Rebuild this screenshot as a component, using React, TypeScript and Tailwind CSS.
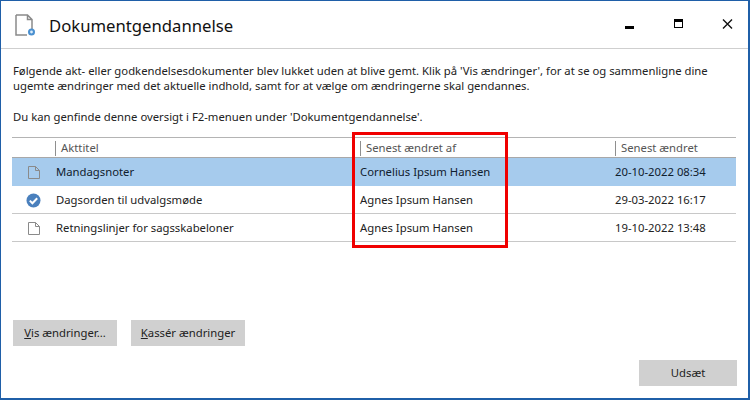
import React from "react";

const font = { fontFamily: '"Noto Sans", "Open Sans", sans-serif' };

function DocIcon({ color = "#8a8a8a" }: { color?: string }) {
  return (
    <svg width="14" height="15" viewBox="0 0 14 15" fill="none">
      <path d="M1.5 1.5H8.5L12.5 5.5V13.5H1.5Z M8.5 1.5V5.5H12.5" stroke={color} strokeWidth="1" fill="none" />
    </svg>
  );
}

function CheckIcon() {
  return (
    <svg width="15" height="15" viewBox="0 0 15 15">
      <circle cx="7.5" cy="7.5" r="7" fill="#4a80bd" />
      <path d="M3.8 7.6L6.4 10.2L11.2 5.2" stroke="#fff" strokeWidth="2" fill="none" />
    </svg>
  );
}

function Sep() {
  return <span className="h-[15px] w-px bg-[#8f8f8f] shrink-0" />;
}

const rows = [
  { t: "Mandagsnoter", a: "Cornelius Ipsum Hansen", d: "20-10-2022 08:34", sel: true, icon: "doc" },
  { t: "Dagsorden til udvalgsmøde", a: "Agnes Ipsum Hansen", d: "29-03-2022 16:17", sel: false, icon: "check" },
  { t: "Retningslinjer for sagsskabeloner", a: "Agnes Ipsum Hansen", d: "19-10-2022 13:48", sel: false, icon: "doc" },
];

export default function App() {
  return (
    <div
      className="relative w-[750px] h-[400px] bg-white border border-r-2 border-b-2 border-[#1f5fa8] flex flex-col text-[#1c1c1c] overflow-hidden"
      style={font}
    >
      <div className="h-[48px] shrink-0 flex items-center border-b border-[#cfcfcf] pl-[14px]">
        <svg width="20" height="23" viewBox="0 0 20 23" fill="none" className="shrink-0 mt-[2px]">
          <path d="M1 1H12.5L17 5.5V15M12 21H1V1 M12.5 1V5.5H17" stroke="#8a8a8a" strokeWidth="1.5" />
          <circle cx="16.5" cy="18" r="3.5" fill="#4a90d0" />
          <circle cx="16.5" cy="18" r="1.4" fill="#dcecfa" />
        </svg>
        <span className="ml-[14px] text-[16.7px] leading-none text-[#111] mt-[4px]">Dokumentgendannelse</span>
        <div className="ml-auto flex items-center h-full">
          <svg width="10" height="4" className="mr-[39px] mt-[7px]"><rect width="9" height="3" fill="#000" /></svg>
          <svg width="10" height="10" className="mr-[38px] -mt-[2px]"><rect x="0.5" y="0.5" width="8" height="8" fill="none" stroke="#000" /><rect width="9" height="3" fill="#000" /></svg>
          <svg width="11" height="10" className="mr-[15px] -mt-[2px]"><path d="M1 0.5L10 9.5M10 0.5L1 9.5" stroke="#111" strokeWidth="1.4" /></svg>
        </div>
      </div>

      <div className="px-[11px] flex flex-col flex-1">
        <p className="ml-px mt-[14px] text-[11.3px] leading-[15px] whitespace-pre-line text-[#222]">
          {"Følgende akt- eller godkendelsesdokumenter blev lukket uden at blive gemt. Klik på 'Vis ændringer', for at se og sammenligne dine\nugemte ændringer med det aktuelle indhold, samt for at vælge om ændringerne skal gendannes."}
        </p>
        <p className="ml-px mt-[16px] text-[11.3px] leading-[15px] text-[#222]">
          Du kan genfinde denne oversigt i F2-menuen under 'Dokumentgendannelse'.
        </p>

        <div className="mt-[13px] w-[724px] border-t border-[#b4b4b4] text-[11.3px]">
          <div className="h-[20px] pt-px grid grid-cols-[43px_305px_255px_1fr] items-center border-b border-[#a8a8a8] text-[#555]">
            <span />
            <span className="flex items-center gap-[5px]"><Sep />Akttitel</span>
            <span className="flex items-center gap-[5px]"><Sep />Senest ændret af</span>
            <span className="flex items-center gap-[5px]"><Sep />Senest ændret<span className="ml-auto"><Sep /></span></span>
          </div>
          {rows.map((r) => (
            <div
              key={r.t}
              className={`h-[28px] pt-[2px] grid grid-cols-[43px_305px_255px_1fr] items-center border-b ${r.sel ? "bg-[#a6cbed] border-[#a6cbed] text-[#10202e]" : "border-[#c8c8c8] text-[#222]"}`}
            >
              <span className="flex justify-center">
                {r.icon === "doc" ? <DocIcon /> : <CheckIcon />}
              </span>
              <span className="pl-[1px]">{r.t}</span>
              <span>{r.a}</span>
              <span>{r.d}</span>
            </div>
          ))}
        </div>

        <div className="ml-px mt-[78px] flex gap-[14px] text-[11.3px]">
          <button className="w-[104px] h-[26px] bg-[#d0d0d0] text-[#222]"><u>V</u>is ændringer...</button>
          <button className="w-[114px] h-[26px] bg-[#d0d0d0] text-[#222]"><u>K</u>assér ændringer</button>
        </div>
        <div className="mt-[14px] flex justify-end text-[11.3px]">
          <button className="w-[98px] h-[26px] bg-[#d0d0d0] text-[#222]">Udsæt</button>
        </div>
      </div>

      <div className="absolute left-[351px] top-[131px] w-[156px] h-[116px] border-[3px] border-[#f00000]" />
    </div>
  );
}
